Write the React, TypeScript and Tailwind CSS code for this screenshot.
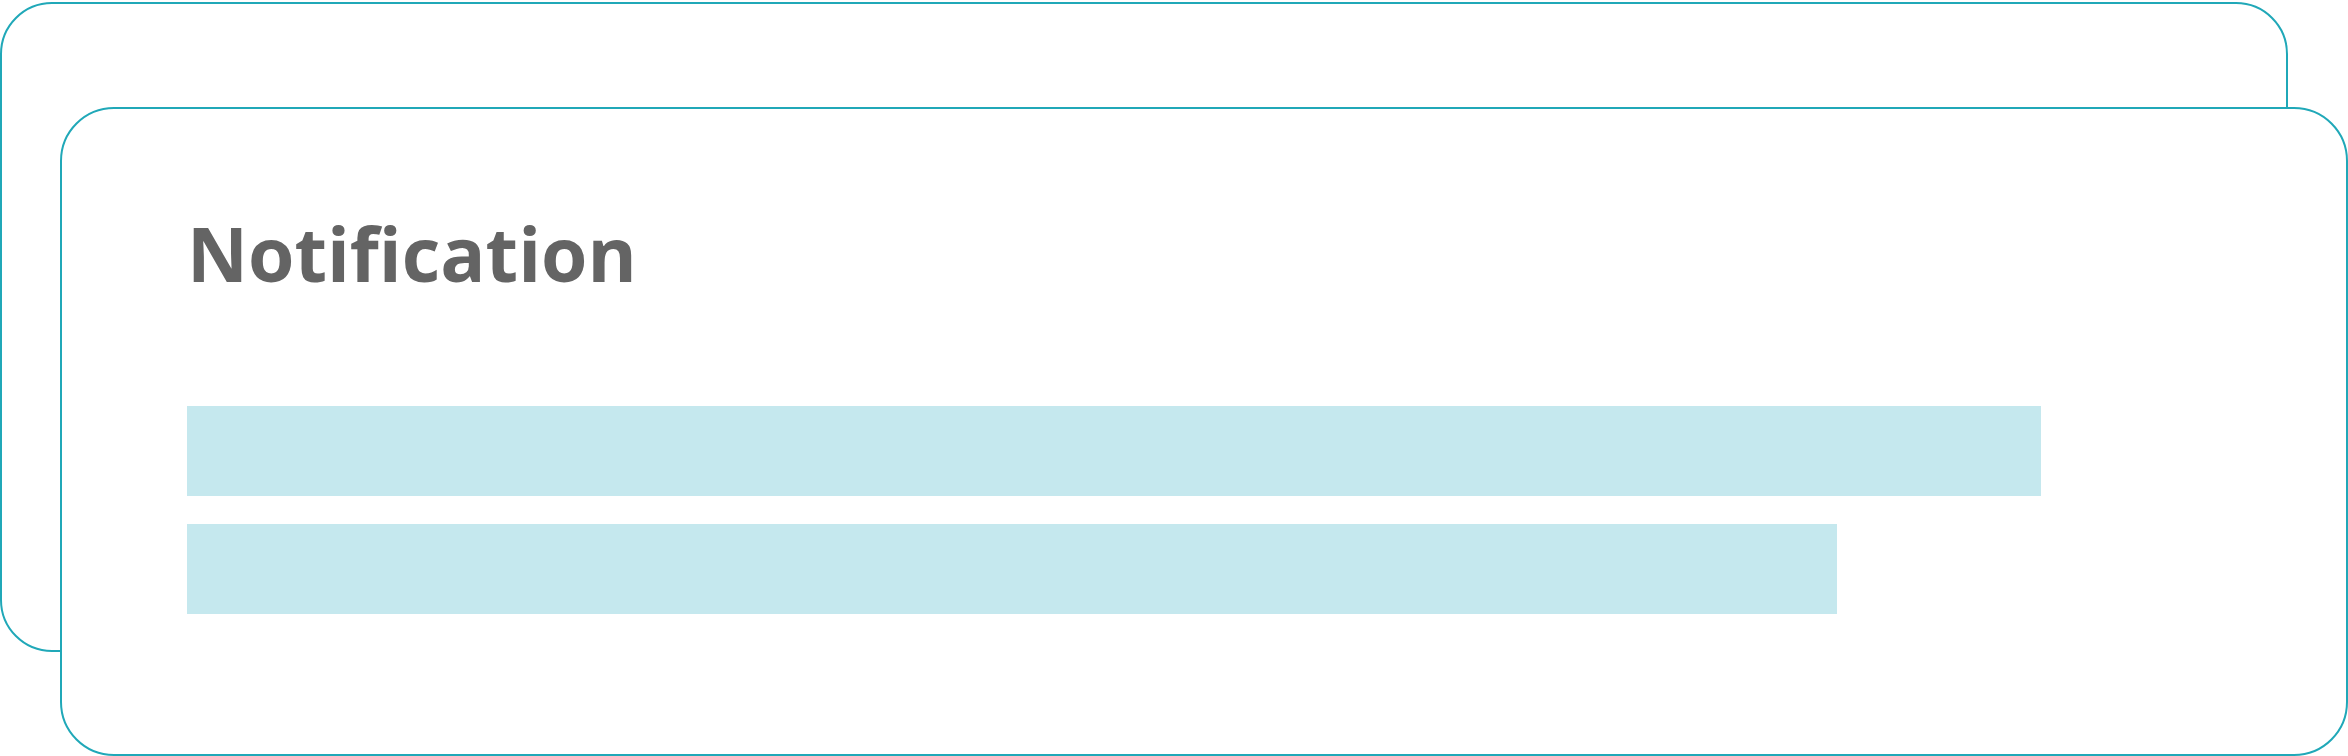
import React from "react";

const bars = [
  { width: "w-[1854px]" },
  { width: "w-[1650px]" },
];

const App = () => {
  return (
    <div className="relative w-[2348px] h-[756px] overflow-hidden bg-white">
      {/* back card */}
      <div className="mt-[2px] w-[2288px] h-[650px] rounded-[52px] border-2 border-[#20a8b8] bg-white" />

      {/* front card, lies over the back one */}
      <div className="absolute left-[60px] top-[107px] right-0 bottom-0 rounded-[54px] border-2 border-[#20a8b8] bg-white">
        <div className="flex flex-col pl-[125px] pt-[107px]">
          <h1
            className="text-[75px] font-bold leading-none text-[#646464]"
            style={{ fontFamily: "'Open Sans', Lato, sans-serif" }}
          >
            Notification
          </h1>
          <div className="mt-[115px] flex flex-col gap-[28px]">
            {bars.map((b, i) => (
              <div key={i} className={`${b.width} h-[90px] bg-[#c5e8ee]`} />
            ))}
          </div>
        </div>
      </div>
    </div>
  );
};

export default App;
